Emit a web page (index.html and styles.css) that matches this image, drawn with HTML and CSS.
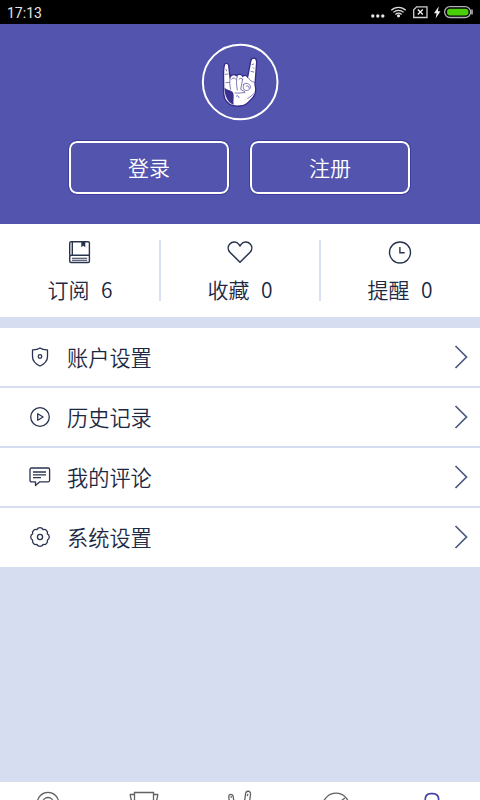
FILE: index.html
```html
<!DOCTYPE html>
<html lang="zh-CN">
<head>
<meta charset="utf-8">
<title>我的</title>
<link rel="stylesheet" href="styles.css">
</head>
<body>
<div class="app">
  <div class="status">
    <span class="time">17:13</span>
    <svg class="status-icons" width="110" height="24" viewBox="0 0 110 24" fill="none">
      <g fill="#e4e4e4"><circle cx="2.8" cy="16" r="1.7"/><circle cx="7.8" cy="16" r="1.7"/><circle cx="12.8" cy="16" r="1.7"/><circle cx="28.5" cy="15.8" r="1.6"/></g>
      <path d="M21.3 10.3a10.2 10.2 0 0 1 14.4 0M23.4 12.4a7.2 7.2 0 0 1 10.2 0M25.400 14.500a4.400 4.400 0 0 1 6.200 0" stroke="#ddd" stroke-width="1.3"/>
      <path d="M46.700 6.800H57v10.700H43.700V9.800z" stroke="#d0d0d0" stroke-width="1.3"/>
      <path d="M47.800 9.600l5 5M52.800 9.600l-5 5" stroke="#eee" stroke-width="1.4"/>
      <path d="M68.800 6.200l-4.800 7h2.600l-1 5.300 4.900-7.200h-2.600z" fill="#eee"/>
      <rect x="74.600" y="6.700" width="26" height="10.800" rx="5.400" stroke="#b5afb9" stroke-width="1.3"/>
      <path d="M102 9.500v5" stroke="#b5afb9" stroke-width="1.6"/>
      <rect x="77" y="8.700" width="21.500" height="6.800" rx="3.200" fill="#49ce0a"/>
    </svg>
  </div>

  <header class="hero">
    <svg class="avatar" width="78" height="78" viewBox="18 15 234 234" fill="none">
      <circle cx="135.500" cy="132" r="112" stroke="#fff" stroke-width="6"/>
      <path d="M88 82c1-8 11-8 13 0l4 35c6-9 14-9 19-4 7-6 17-5 19 2 5-4 11-3 15 2l9-47c2-14 18-12 18 2l-5 67c4 16 4 28-6 39-14 15-22 26-40 26-22 2-38-6-45-23-4-12-4-25-3-38 0-25-2-46 2-61z" fill="#fff" stroke="#35298b" stroke-width="4"/>
      <path d="M88 148c7 9 18 8 25 14 6 9 1 24 3 39-18-7-27-26-28-53z" fill="#39308b"/>
      <path d="M106 118c-3 10-2 25 1 36M127 114c-4 12-3 26 0 42M132 124c4-5 8-4 10 0M143 123l-6 31 12 7M109 124c3-5 10-5 13-1M161 121c4 7 9 10 17 12M146 139c10-8 22 1 20 11-5 9-17 10-20 3-2-6-1-11 0-14M153 145c4-4 10 0 9 5M120 165c10 2 23-2 30-1M124 174c6-2 8 1 8 5M91 109l8-1M93 134l10-1M93 94l2 5M168 100l8 2M171 80l5-2M174 89l3 2M158 181c7-3 13-9 18-14" stroke="#40368f" stroke-width="2" stroke-linecap="round"/>
    </svg>
    <div class="auth"><a class="button">登录</a><a class="button">注册</a></div>
  </header>

  <section class="stats">
    <div class="stat">
      <svg class="stat-icon" width="24" height="24" viewBox="0 0 24 24" fill="none" stroke="#28344f" stroke-width="1.400">
        <path d="M1.700 15.500V3.200q0-1.500 1.500-1.500h17q1.200 0 1.200 1.300v18.300q0 1.200-1.200 1.200H3.200q-1.500 0-1.500-1.500v-4q0-1.800 1.800-1.800h18M4.300 2v13"/><path d="M4 18.200h15.200M4 20.200h15.200" stroke-width="1.100"/><path d="M13.300 2h4v5.300l-2-1.500-2 1.500z" fill="#28344f" stroke="none"/>
      </svg>
      <span class="stat-label">订阅  6</span>
    </div>
    <div class="stat">
      <svg class="stat-icon" width="26" height="24" viewBox="0 0 26 24" fill="none" stroke="#28344f" stroke-width="1.500" stroke-linejoin="round"><path d="M13 22.300L2.900 12.200C.8 10 .6 6.500 2.800 4.100c2.600-2.900 7-2.500 9.100.3L13 6l1.100-1.600c2.100-2.800 6.500-3.200 9.100-.3 2.200 2.400 2 5.900-.1 8.100z"/></svg>
      <span class="stat-label">收藏  0</span>
    </div>
    <div class="stat">
      <svg class="stat-icon" width="24" height="24" viewBox="0 0 24 24" fill="none" stroke="#28344f" stroke-width="1.400"><circle cx="12" cy="12.500" r="10.500"/><path d="M11.900 7v5.700h4.800"/></svg>
      <span class="stat-label">提醒  0</span>
    </div>
  </section>

  <nav class="menu">
    <a class="row">
      <svg class="row-icon" width="24" height="24" viewBox="0 0 24 24"><path d="M12 3c-2 1.500-4.500 2-7.500 1.900v6.500c0 4.300 3 7.400 7.500 9.600 4.500-2.200 7.500-5.300 7.500-9.600V4.900C16.500 5 14 4.500 12 3z"/><circle cx="12" cy="11.500" r="1.800"/></svg>
      <span class="row-label">账户设置</span>
      <svg class="arrow" width="14" height="24" viewBox="0 0 14 24"><path d="M1.500 1L12.500 12l-11 11"/></svg>
    </a>
    <a class="row">
      <svg class="row-icon" width="24" height="24" viewBox="0 0 24 24"><circle cx="12" cy="12" r="9.300"/><path d="M9.700 8.800v6.400l5.400-3.200z"/></svg>
      <span class="row-label">历史记录</span>
      <svg class="arrow" width="14" height="24" viewBox="0 0 14 24"><path d="M1.500 1L12.500 12l-11 11"/></svg>
    </a>
    <a class="row">
      <svg class="row-icon" width="24" height="24" viewBox="0 0 24 24"><path d="M3.500 3h16.800q1.300 0 1.300 1.500v10.800q0 1.500-1.300 1.500h-8.500L7.500 20.500v-3.700h-4q-1.500 0-1.500-1.500V4.500Q2 3 3.500 3z"/><path d="M5 7h13M5 9.800h13M5 12.600h8"/></svg>
      <span class="row-label">我的评论</span>
      <svg class="arrow" width="14" height="24" viewBox="0 0 14 24"><path d="M1.500 1L12.500 12l-11 11"/></svg>
    </a>
    <a class="row">
      <svg class="row-icon" width="24" height="24" viewBox="0 0 24 24"><path d="M8.900 4.600a3.500 3.500 0 0 1 6.200 0a3.500 3.500 0 0 1 4.300 4.300a3.500 3.500 0 0 1 0 6.200a3.500 3.500 0 0 1-4.300 4.300a3.500 3.500 0 0 1-6.200 0a3.500 3.500 0 0 1-4.300-4.300a3.500 3.500 0 0 1 0-6.200a3.500 3.500 0 0 1 4.300-4.300z"/><circle cx="12" cy="12" r="2.600"/></svg>
      <span class="row-label">系统设置</span>
      <svg class="arrow" width="14" height="24" viewBox="0 0 14 24"><path d="M1.500 1L12.500 12l-11 11"/></svg>
    </a>
  </nav>

  <footer class="tabs">
    <svg class="tab" width="32" height="32" viewBox="0 0 32 32"><circle cx="16" cy="21" r="10.700"/><circle cx="16" cy="21" r="5.500"/></svg>
    <svg class="tab" width="32" height="32" viewBox="0 0 32 32"><path d="M6.500 10.500h19v7a9.500 9.500 0 0 1-19 0zM6.500 12.500H2.300q0 7 5 10M25.500 12.500h4.200q0 7-5 10"/></svg>
    <svg class="tab" width="32" height="32" viewBox="0 0 32 32"><path d="M6 24l-1.200-9c-.3-3.500 4-3.500 4.500 0l.7 6M20.500 20l1-8c.5-4 5.500-3.500 5 .5L25 24M6.500 15h1.500M23 14l1-2"/></svg>
    <svg class="tab" width="32" height="32" viewBox="0 0 32 32"><circle cx="16" cy="24.500" r="13.300"/><path d="M22 18l3-2"/></svg>
    <svg class="tab tab-active" width="32" height="32" viewBox="0 0 32 32"><path d="M9.200 19v-1q0-6.400 5.500-6.400h2.200q5.800 0 5.800 6.400v1"/></svg>
  </footer>
</div>
</body>
</html>
```
FILE: styles.css
```css
* { box-sizing: border-box; }
body {
  margin: 0;
  font-family: "Noto Sans CJK SC", sans-serif;
  font-weight: 350;
  color: #1d2944;
}
.app {
  display: flex;
  flex-direction: column;
  width: 480px;
  height: 800px;
  overflow: hidden;
  background: #d6ddf0;
}
.status {
  display: flex;
  justify-content: space-between;
  flex: 0 0 24px;
  height: 24px;
  min-height: 0;
  overflow: hidden;
  background: #000;
  color: #e6e6e6;
}
.time { padding-left: 7px; font: 14px/26px Roboto, sans-serif; }
.hero {
  display: flex;
  flex-direction: column;
  align-items: center;
  flex: 0 0 200px;
  padding-top: 19px;
  background: #5254ae;
}
.avatar { display: block; }
.auth { display: flex; gap: 21px; margin-top: 20px; padding-right: 1px; }
.button {
  width: 160px;
  height: 53px;
  border: 2px solid #fff;
  outline: 1px solid #403c9b;
  border-radius: 8px;
  color: #fff;
  font-size: 21px;
  line-height: 49px;
  text-align: center;
}
.stats {
  display: flex;
  flex: 0 0 93px;
  padding-top: 16px;
  background: #fff;
}
.stat {
  display: flex;
  flex: 1;
  flex-direction: column;
  align-items: center;
  height: 61px;
}
.stat + .stat { box-shadow: inset 1px 0 #d9e0f3, -1px 0 #d9e0f3; }
.stat-icon { flex-shrink: 0; }
.stat-label {
  flex-shrink: 0;
  margin-top: 10px;
  font-size: 21px;
  line-height: 30px;
  white-space: pre;
  word-spacing: 1px;
}
.menu { margin-top: 11px; }
.row {
  display: flex;
  align-items: center;
  height: 60px;
  padding: 0 12px 0 28px;
  border-bottom: 2px solid #d6ddf2;
  background: #fff;
}
.row:last-child { height: 59px; padding-bottom: 1px; border-bottom: 0; }
.row-icon, .arrow, .tab { fill: none; }
.row-icon { stroke: #28344f; stroke-width: 1.3; stroke-linejoin: round; }
.row-label { flex: 1; margin-left: 15px; font-size: 21.200px; line-height: 30px; }
.arrow { stroke: #4b5b7d; stroke-width: 1.7; }
.tabs {
  display: flex;
  justify-content: space-around;
  flex: 0 0 50px;
  margin: auto 0 -32px;
  background: #fff;
}
.tab { stroke: #616161; stroke-width: 1.3; }
.tab-active { stroke: #4542a5; stroke-width: 1.6; }
```
